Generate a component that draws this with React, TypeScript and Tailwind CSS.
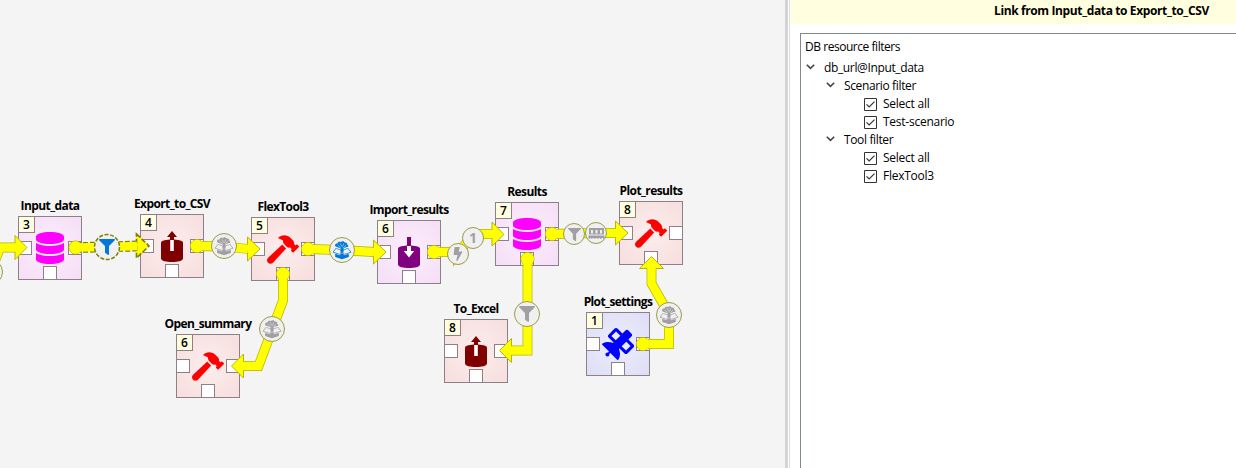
import React from "react";
import { FaBolt, FaDatabase, FaFilter, FaHammer, FaSatellite } from "react-icons/fa";

type Kind = "data" | "exporter" | "tool" | "importer" | "connection";

type NodeInfo = {
  name: string;
  rank: number;
  kind: Kind;
  place: string;
};

const nodes: NodeInfo[] = [
  { name: "Input_data", rank: 3, kind: "data", place: "left-[18px] top-[216px]" },
  { name: "Export_to_CSV", rank: 4, kind: "exporter", place: "left-[140px] top-[214px]" },
  { name: "FlexTool3", rank: 5, kind: "tool", place: "left-[251px] top-[217px]" },
  { name: "Import_results", rank: 6, kind: "importer", place: "left-[377px] top-[220px]" },
  { name: "Results", rank: 7, kind: "data", place: "left-[495px] top-[202px]" },
  { name: "Plot_results", rank: 8, kind: "tool", place: "left-[619px] top-[201px]" },
  { name: "Open_summary", rank: 6, kind: "tool", place: "left-[176px] top-[334px]" },
  { name: "To_Excel", rank: 8, kind: "exporter", place: "left-[444px] top-[319px]" },
  { name: "Plot_settings", rank: 1, kind: "connection", place: "left-[586px] top-[312px]" },
];

const fills: Record<Kind, string> = {
  data: "bg-[radial-gradient(circle,#fceffc_0%,#f5ddf6_100%)]",
  importer: "bg-[radial-gradient(circle,#fceffc_0%,#f5ddf6_100%)]",
  exporter: "bg-[radial-gradient(circle,#fceded_0%,#f6dedd_100%)]",
  tool: "bg-[radial-gradient(circle,#fceded_0%,#f6dedd_100%)]",
  connection: "bg-[radial-gradient(circle,#ededfc_0%,#dddef6_100%)]",
};

function Cylinder({ color, inward }: { color: string; inward?: boolean }) {
  return (
    <svg width="24" height="33" viewBox="0 0 24 33">
      <path d="M1 12.5C1 8.5 23 8.5 23 12.5V28.5C23 33.3 1 33.3 1 28.5Z" fill={color} />
      {inward ? (
        <>
          <path d="M10 1h4v9h-4z" fill={color} />
          <path d="M10 10h4v5h3.2L12 21.5 6.800 15H10z" fill="#fff" />
        </>
      ) : (
        <>
          <path d="M12 1L17 7h-3v4h-4V7H7z" fill={color} />
          <path d="M10.200 10h3.600v11h-3.600z" fill="#fff" />
        </>
      )}
    </svg>
  );
}

function NodeIcon({ kind }: { kind: Kind }) {
  switch (kind) {
    case "data":
      return <FaDatabase className="h-8 w-7 text-[#ff00ff]" />;
    case "tool":
      return <FaHammer className="h-[29px] w-8 text-[#ff0000]" />;
    case "connection":
      return <FaSatellite className="h-8 w-8 text-[#0000ff]" />;
    case "exporter":
      return <Cylinder color="#800000" />;
    case "importer":
      return <Cylinder color="#800080" inward />;
  }
}

const slot = "absolute size-[14px] border border-[#8e8088] bg-white";

function ProjectNode({ node }: { node: NodeInfo }) {
  return (
    <div className={`absolute size-16 border border-[#8e8088] ${fills[node.kind]} ${node.place}`}>
      <div className="absolute -top-[20px] left-1/2 -translate-x-1/2 text-[12px] leading-[18px] font-bold tracking-[-0.6px] whitespace-nowrap text-black">
        {node.name}
      </div>
      <div className="flex size-full items-center justify-center">
        <NodeIcon kind={node.kind} />
      </div>
      <div className={`${slot} top-[24px] -left-px`} />
      <div className={`${slot} top-[24px] -right-px`} />
      <div className={`${slot} -bottom-px left-[24px]`} />
      <div className="absolute -top-px -left-px flex size-[17px] items-center justify-center border border-[#8e8088] bg-[#ffffe0] text-[12px] leading-none font-semibold text-black">
        {node.rank}
      </div>
    </div>
  );
}

type LinkInfo = { line: string; arrow: string; start?: [number, number]; dashed?: boolean };

const links: LinkInfo[] = [
  { line: "M-9 272L0 247.500H16", arrow: "15,235.500 27,247.500 15,259.500" },
  { line: "M76 247.500L107 247L137 246", arrow: "136.500,234 149,246 136.500,258", start: [75.5, 247.5], dashed: true },
  { line: "M197 246L224 246.500L248 249", arrow: "247.500,237 260,249 247.500,261", start: [197, 246] },
  { line: "M308 249L341 250L374 252", arrow: "373.500,240 386,252 373.500,264", start: [308, 249] },
  { line: "M434 252H458V253L472 236V234H493", arrow: "492,222 504,234.500 492,246", start: [434, 252] },
  { line: "M552 234L596 233H616", arrow: "615.500,221 628,233 615.500,245", start: [552, 234] },
  { line: "M283 274V300.500L258.500 366H243", arrow: "243.500,354 231.500,366 243.500,378", start: [283, 274] },
  { line: "M527.500 259V350.500H511", arrow: "511.500,338.500 499.500,350.500 511.500,362.500", start: [527.5, 259] },
  { line: "M643 344H669V314L651.500 283.500V268", arrow: "639.500,268.500 651.500,256.500 663.500,268.500", start: [643, 344] },
];

function Link({ link }: { link: LinkInfo }) {
  const edge = link.dashed ? "#808000" : "#b5b500";
  const dash = link.dashed ? "5 2" : undefined;
  const grow = link.dashed ? 2.4 : 1.4;
  return (
    <g>
      <path d={link.line} fill="none" stroke={edge} strokeWidth={8.4 + grow} strokeDasharray={dash} />
      {link.start && (
        <circle cx={link.start[0]} cy={link.start[1]} r="6.500" fill="#ff0" stroke="#b5b500" strokeWidth="1" />
      )}
      <polygon points={link.arrow} fill="#ff0" stroke={edge} strokeWidth={grow * 0.7} strokeDasharray={dash} />
      <path d={link.line} fill="none" stroke="#ff0" strokeWidth="8.400" />
      {link.start && <circle cx={link.start[0]} cy={link.start[1]} r="6.300" fill="#ff0" />}
    </g>
  );
}

function TreeBox({ color }: { color: string }) {
  return (
    <svg width="20" height="20" viewBox="0 0 20 20">
      <path d="M4.500 8.500L10 10.500 15.500 8.500" stroke={color} strokeWidth=".700" fill="none" />
      <path
        d="M3.600 6.400C2.200 5.100 3.800 3.200 5.500 3.600 5.700 1.700 8 1.500 8.800 2.200 9.800.700 12.200 1.100 12.700 2.600 14.500 2.300 15.800 3.600 15.200 4.800 17 5 16.600 7.100 15.100 7L11.700 7.900 11.400 12.500H8.500V8.200Z"
        fill={color}
      />
      <path d="M5.500 5L9.400 7.900M8 3.300L9.900 6.500M11.800 3.300L10.500 6.500M14.300 5L11 7.800" stroke="#f2f2f2" strokeWidth=".500" fill="none" />
      <path d="M4.300 8L1 12.200 7.300 14.300 10 11.800 12.700 14.300 19 12.200 15.700 8" fill="none" stroke={color} strokeWidth=".800" />
      <path d="M3.200 13.700L7.500 15.200 10 12.800 12.500 15.200 16.800 13.700V17L10 19.300 3.200 17Z" fill={color} />
    </svg>
  );
}

function Ram() {
  return (
    <svg width="17" height="13" viewBox="0 0 17 13">
      <path
        fillRule="evenodd"
        d="M1 1H16V7.500H1ZM3 3V6.500H5V3ZM7.500 3V6.500H9.500V3ZM12 3V6.500H14V3Z"
        fill="#a0a0a4"
      />
      <path d="M.500 8.500H16.500V11.800H15V10.900H13.500V11.800H12V10.900H10.500V11.800H9V10.900H7.500V11.800H6V10.900H4.500V11.800H3V10.900H2V11.800H.500Z" fill="#a0a0a4" />
    </svg>
  );
}

type MarkerInfo = { place: string; small?: boolean; dashed?: boolean; icon: React.ReactNode };

const markers: MarkerInfo[] = [
  { place: "left-[-23px] top-[259px]", icon: null },
  { place: "left-[94px] top-[234px]", dashed: true, icon: <FaFilter className="size-4 text-[#0078d7]" /> },
  { place: "left-[211px] top-[233px]", icon: <TreeBox color="#a0a0a0" /> },
  { place: "left-[329px] top-[237px]", icon: <TreeBox color="#0078d7" /> },
  { place: "left-[447px] top-[243px]", small: true, icon: <FaBolt className="size-[14px] text-[#a0a0a4]" /> },
  {
    place: "left-[462px] top-[227px]",
    small: true,
    icon: <span className="text-[14px] leading-none font-bold text-[#a0a0a4]">1</span>,
  },
  { place: "left-[563px] top-[223px]", small: true, icon: <FaFilter className="size-[13px] text-[#a0a0a4]" /> },
  { place: "left-[585px] top-[222px]", small: true, icon: <Ram /> },
  { place: "left-[259px] top-[316px]", icon: <TreeBox color="#a0a0a0" /> },
  { place: "left-[514px] top-[301px]", icon: <FaFilter className="size-4 text-[#a0a0a4]" /> },
  { place: "left-[656px] top-[302px]", icon: <TreeBox color="#a0a0a0" /> },
];

function Marker({ marker }: { marker: MarkerInfo }) {
  return (
    <div
      className={`absolute flex items-center justify-center rounded-full bg-[#f0f0f0] ${
        marker.small ? "size-[22px]" : "size-[26px]"
      } ${marker.dashed ? "" : "border border-[#9c9c45]"} ${marker.place}`}
    >
      {marker.dashed && (
        <svg className="absolute inset-0 overflow-visible" width="26" height="26">
          <circle cx="13" cy="13" r="12.500" fill="none" stroke="#808000" strokeWidth="1.500" strokeDasharray="4 1.600" />
        </svg>
      )}
      {marker.icon}
    </div>
  );
}

function DesignView() {
  return (
    <section className="relative w-[785px] shrink-0 overflow-hidden bg-[#f4f4f4]">
      {nodes.map((n) => (
        <ProjectNode key={n.name} node={n} />
      ))}
      <svg className="absolute inset-0" width="785" height="468">
        {links.map((l) => (
          <Link key={l.arrow} link={l} />
        ))}
      </svg>
      {markers.map((m) => (
        <Marker key={m.place} marker={m} />
      ))}
    </section>
  );
}

function Chevron() {
  return (
    <svg width="9" height="6" viewBox="0 0 9 6">
      <path d="M.800.800L4.500 4.400 8.200.800" fill="none" stroke="#444" strokeWidth="1.600" />
    </svg>
  );
}

function Branch({ label, indent }: { label: string; indent: string }) {
  return (
    <div className={`flex h-[18px] items-center ${indent}`}>
      <span className="flex w-[18px] items-center pb-[2px]">
        <Chevron />
      </span>
      <span>{label}</span>
    </div>
  );
}

function CheckRow({ label }: { label: string }) {
  return (
    <div className="flex h-[18px] items-center gap-[6px] pl-[63px]">
      <svg width="13" height="13" viewBox="0 0 13 13">
        <path d="M.500.500h12v12H.500z" fill="#fff" stroke="#333" />
        <path d="M2.500 6.300L5.200 9 10.500 3.700" fill="none" stroke="#333" strokeWidth="1.200" />
      </svg>
      <span className="tracking-[-0.25px]">{label}</span>
    </div>
  );
}

function LinkProperties() {
  return (
    <aside className="flex min-w-0 flex-1 flex-col overflow-hidden bg-white">
      <header className="ml-px flex h-6 shrink-0 items-center bg-[#ffffe0] pb-[2px] pl-[203px] text-[12px] font-bold tracking-[-0.38px] whitespace-nowrap text-black">
        Link from Input_data to Export_to_CSV
      </header>
      <div className="mt-[9px] ml-[10px] flex-1 border-t border-l border-[#828790] pt-1 text-[12px] leading-[18px] tracking-[-0.36px] text-black">
        <div className="mb-[3px] pl-1 tracking-[-0.46px]">DB resource filters</div>
        <Branch label="db_url@Input_data" indent="pl-[5px]" />
        <Branch label="Scenario filter" indent="pl-[25px]" />
        <CheckRow label="Select all" />
        <CheckRow label="Test-scenario" />
        <Branch label="Tool filter" indent="pl-[25px]" />
        <CheckRow label="Select all" />
        <CheckRow label="FlexTool3" />
      </div>
    </aside>
  );
}

export default function App() {
  return (
    <main className="flex h-[468px] w-[1236px] overflow-hidden bg-white font-['Open_Sans','Noto_Sans',sans-serif]">
      <DesignView />
      <div className="w-[3px] shrink-0 bg-[#d3d3d3]" />
      <div className="w-[2px] shrink-0 border-r border-[#dcdcdc] bg-white" />
      <LinkProperties />
    </main>
  );
}
